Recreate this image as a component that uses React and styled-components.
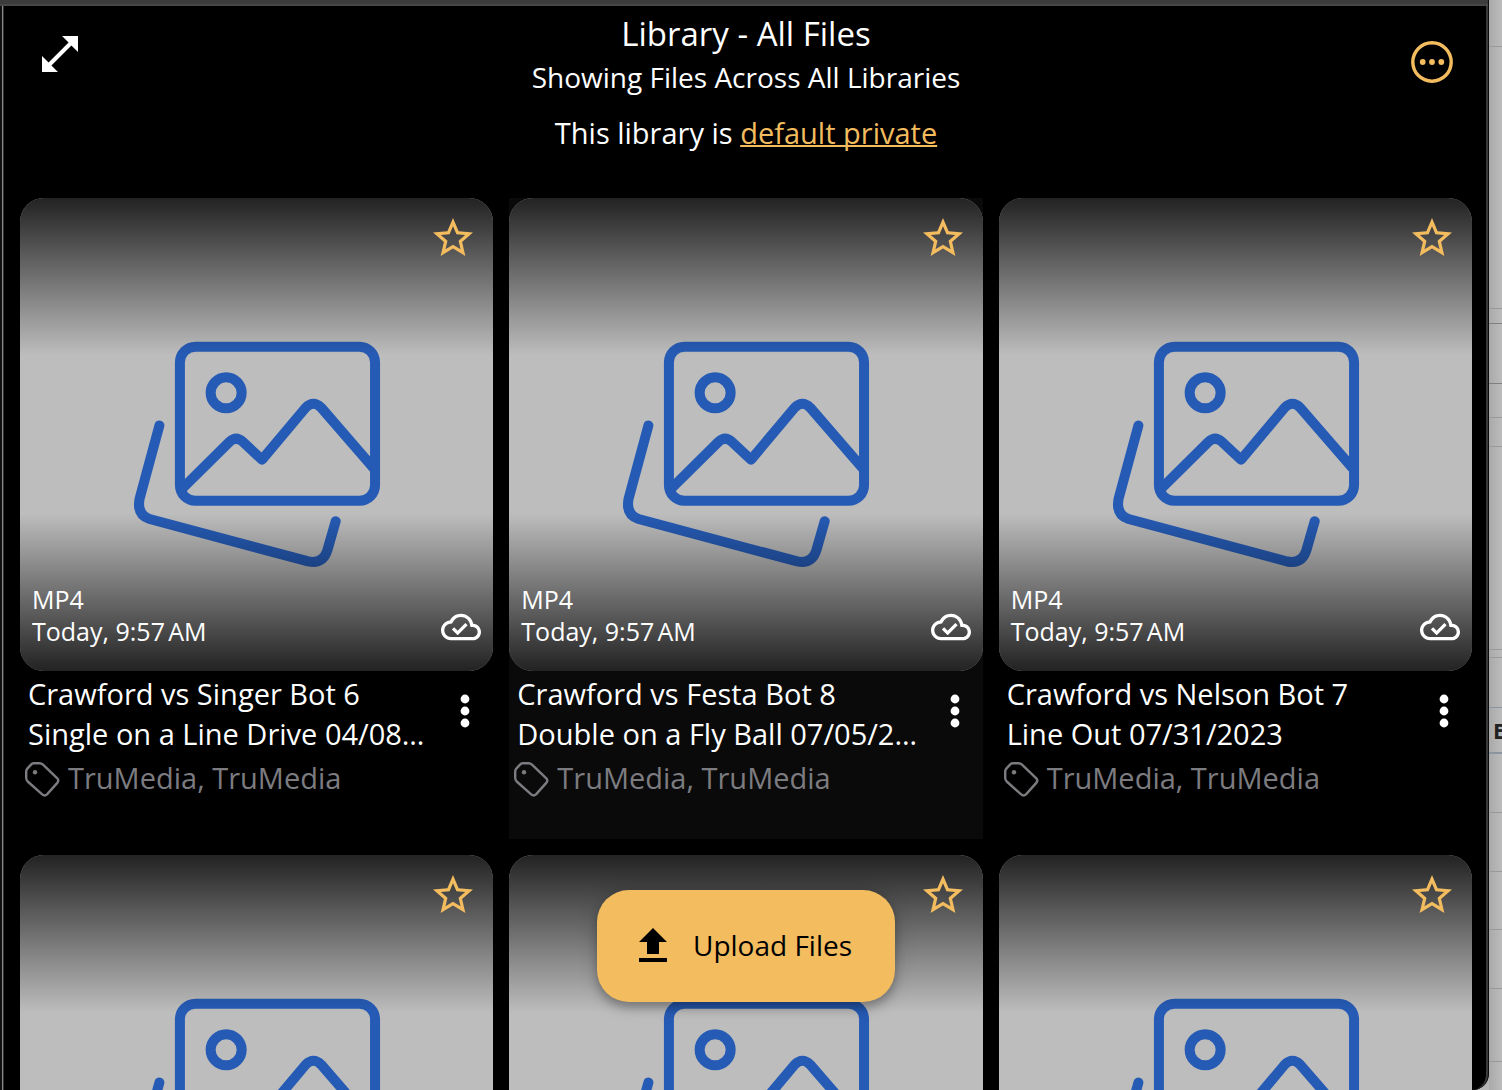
import React from 'react';
import styled, { createGlobalStyle } from 'styled-components';

const GlobalStyle = createGlobalStyle`
  * { box-sizing: border-box; }
  body {
    margin: 0;
    background: #111;
    color: #fff;
    font-family: "Open Sans", "Noto Sans", sans-serif;
    overflow: hidden;
  }
  button { font: inherit; color: inherit; }
`;

const Desktop = styled.div`
  display: flex;
  height: 100vh;
  overflow: hidden;
  background: #b5b5b5;
`;

const Window = styled.div`
  flex: 1;
  min-width: 0;
  display: flex;
  flex-direction: column;
  position: relative;
  overflow: hidden;
  background: #3c3c3c;
  border-right: 1px solid #0c0c0c;
  border-bottom-right-radius: 16px;
`;

const TitleStrip = styled.div`
  flex: none;
  height: 6px;
  background: #3c3c3c;
  border-bottom: 2px solid #474747;
`;

const Shell = styled.div`
  flex: 1;
  min-height: 0;
  display: flex;
  background: #111;
  padding-left: 2px;
`;

const Screen = styled.main`
  flex: 1;
  min-width: 0;
  overflow: hidden;
  background: #000;
  border-left: 1px solid #888;
  border-right: 2px solid #3a3a3a;
  border-bottom-right-radius: 16px;
  box-shadow: inset 1px 0 #333;
`;

const Header = styled.header`
  display: flex;
  align-items: flex-start;
  justify-content: space-between;
  height: 192px;
  padding: 6px 14px 0 17px;
`;

const HeaderText = styled.div`
  flex: 1;
  text-align: center;
`;

const Title = styled.h1`
  margin: 0;
  font-size: 33px;
  font-weight: 400;
  line-height: 44px;
`;

const Subtitle = styled.p`
  margin: 0;
  font-size: 28px;
  line-height: 42px;
`;

const Privacy = styled.p`
  margin: 0;
  padding-top: 14px;
  font-size: 29px;
  line-height: 42px;
`;

const PrivacyLink = styled.a`
  color: #f3bc5f;
  text-decoration: underline;
  text-decoration-skip-ink: none;
  text-decoration-thickness: 2px;
`;

const IconButton = styled.button`
  flex: none;
  display: block;
  width: 48px;
  height: 48px;
  padding: 0;
  border: 0;
  background: none;
  color: ${(p) => (p.$accent ? '#f3bc5f' : '#fff')};
  cursor: pointer;
  svg { display: block; width: 100%; height: 100%; fill: currentColor; }
`;

const HeaderAction = styled.div`
  flex: none;
  width: 80px;
  display: flex;
  justify-content: center;
  padding-top: ${(p) => p.$top}px;
`;

const Grid = styled.section`
  display: grid;
  grid-template-columns: repeat(3, minmax(0, 1fr));
  gap: 16px;
  padding: 0 14px 0 17px;
`;

const Card = styled.article`
  background: ${(p) => (p.$hovered ? '#0a0a0a' : 'transparent')};
`;

const Thumb = styled.div`
  position: relative;
  aspect-ratio: 1;
  border-radius: 24px;
  overflow: hidden;
  background: #bdbdbd;
`;

const Artwork = styled.svg`
  display: block;
  width: 100%;
  height: 100%;
`;

const Overlay = styled.div`
  position: absolute;
  inset: 0;
  display: flex;
  flex-direction: column;
  justify-content: space-between;
  background: linear-gradient(
    rgba(0, 0, 0, 0.82),
    transparent 33.3%,
    transparent 66.7%,
    rgba(0, 0, 0, 0.82)
  );
`;

const OverlayTop = styled.div`
  display: flex;
  justify-content: flex-end;
  padding: 16px;
`;

const OverlayBottom = styled.div`
  display: flex;
  align-items: flex-end;
  justify-content: space-between;
  padding: 0 12px 24px;
`;

const Meta = styled.div`
  font-size: 25px;
  line-height: 32px;
`;

const CloudIcon = styled.svg`
  width: 40px;
  height: 40px;
  fill: #fff;
`;

const Details = styled.div`
  height: 168px;
  padding: 3px 4px 0;
`;

const NameRow = styled.div`
  display: flex;
  justify-content: space-between;
  padding-left: 4px;
`;

const Name = styled.h2`
  flex: 1;
  min-width: 0;
  margin: 0;
  font-size: 29px;
  font-weight: 400;
  line-height: 40px;
`;

const NameLine = styled.span`
  display: block;
  white-space: nowrap;
`;

const MenuSlot = styled.div`
  flex: none;
  padding-top: 13px;
`;

const TagRow = styled.div`
  display: flex;
  align-items: center;
  gap: 8px;
  padding-top: 2px;
  color: #7c7c80;
  font-size: 29px;
  line-height: 44px;
`;

const TagIcon = styled.svg`
  flex: none;
  width: 36px;
  height: 40px;
  fill: none;
  stroke: currentColor;
  stroke-width: 2.4;
  stroke-linejoin: round;
`;

const UploadBar = styled.div`
  position: absolute;
  right: 16px;
  bottom: 88px;
  left: 20px;
  display: flex;
  justify-content: center;
  pointer-events: none;
`;

const UploadButton = styled.button`
  display: flex;
  align-items: center;
  gap: 16px;
  min-width: 298px;
  height: 112px;
  padding: 0 40px 0 32px;
  border: 0;
  border-radius: 32px;
  background: #f3bc5f;
  color: #000;
  font-size: 28px;
  white-space: nowrap;
  box-shadow: 0 6px 10px rgba(0, 0, 0, 0.25), 0 2px 20px rgba(0, 0, 0, 0.15);
  pointer-events: auto;
  cursor: pointer;
  svg { width: 48px; height: 48px; fill: currentColor; }
`;

const UploadLabel = styled.span`
  padding-bottom: 2px;
`;

const Behind = styled.aside`
  flex: none;
  width: 13px;
  overflow: hidden;
  background: linear-gradient(90deg, #a9a9a9, #bcbcbc);
`;

const BehindRow = styled.div`
  display: flex;
  align-items: center;
  height: ${(p) => p.$h}px;
  padding-left: 4px;
  border-bottom: ${(p) => p.$w || 1}px solid ${(p) => p.$line || '#9a9a9a'};
  color: #222;
  font-size: 22px;
  font-weight: 700;
`;

const behindRows = [
  { h: 47 }, { h: 262 }, { h: 15, line: '#808080' }, { h: 60, line: '#808080' },
  { h: 34 }, { h: 29 }, { h: 203 }, { h: 8 },
  { h: 50, line: '#8b95a0' }, { h: 46, line: '#8b95a0', w: 2, text: 'E' },
  { h: 59 }, { h: 59 }, { h: 58 }, { h: 59 }, { h: 73 },
];

const files = [
  ['Crawford vs Singer Bot 6', 'Single on a Line Drive 04/08…'],
  ['Crawford vs Festa Bot 8', 'Double on a Fly Ball 07/05/2…'],
  ['Crawford vs Nelson Bot 7', 'Line Out 07/31/2023'],
  ['Crawford vs Singer Bot 5', 'Single on a Line Drive 04/08…'],
  ['Crawford vs Festa Bot 7', 'Double on a Fly Ball 07/05/2…'],
  ['Crawford vs Nelson Bot 6', 'Line Out 07/31/2023'],
];

function PicturesArt() {
  return (
    <Artwork viewBox="20 198 473 473" aria-hidden="true">
      <g fill="none" stroke="#265bb5" strokeWidth="10" strokeLinecap="round" strokeLinejoin="round">
        <rect x="179.8" y="346.6" width="195" height="154" rx="15.5" />
        <circle cx="226" cy="392.7" r="15.5" />
        <path d="M182 488.500 L229.500 441.500 Q236 435.500 242.500 441.500 L261.800 459.500 L305.500 407.500 Q313.200 399.500 321 407.500 L373 467.500" />
        <path d="M159.300 425.300 L139.500 498.500 Q136.500 514.500 149.500 518.800 L308 561.200 Q322.500 564 327 550.500 L335.500 521" />
      </g>
    </Artwork>
  );
}

function FileCard({ name, hovered }) {
  return (
    <Card $hovered={hovered}>
      <Thumb>
        <PicturesArt />
        <Overlay>
          <OverlayTop>
            <IconButton $accent aria-label="Add to favorites">
              <svg viewBox="0 0 24 24">
                <path d="M22 9.240l-7.190-.62L12 2 9.190 8.630 2 9.240l5.460 4.730L5.820 21 12 17.270 18.180 21l-1.630-7.030L22 9.240zM12 15.400l-3.760 2.270 1-4.280-3.320-2.880 4.380-.38L12 6.100l1.710 4.040 4.380.38-3.320 2.880 1 4.280L12 15.400z" />
              </svg>
            </IconButton>
          </OverlayTop>
          <OverlayBottom>
            <Meta>
              <div>MP4</div>
              <div>Today, 9:57{'\u202f'}AM</div>
            </Meta>
            <CloudIcon viewBox="0 0 24 24" role="img" aria-label="Uploaded">
              <path d="M19.350 10.040C18.670 6.590 15.640 4 12 4 9.110 4 6.600 5.640 5.350 8.040 2.340 8.360 0 10.910 0 14c0 3.310 2.690 6 6 6h13c2.760 0 5-2.240 5-5 0-2.640-2.050-4.780-4.650-4.960zM19 18H6c-2.210 0-4-1.790-4-4 0-2.050 1.530-3.760 3.560-3.970l1.070-.11.5-.95C8.080 7.140 9.940 6 12 6c2.620 0 4.880 1.860 5.390 4.430l.3 1.500 1.530.11c1.560.1 2.780 1.410 2.780 2.960 0 1.650-1.350 3-3 3zm-9-3.820l-2.090-2.090L6.500 13.500 10 17l6.010-6.010-1.410-1.410z" />
            </CloudIcon>
          </OverlayBottom>
        </Overlay>
      </Thumb>
      <Details>
        <NameRow>
          <Name>
            {name.map((line) => <NameLine key={line}>{line}</NameLine>)}
          </Name>
          <MenuSlot>
            <IconButton aria-label="File menu">
              <svg viewBox="0 0 24 24">
                <circle cx="12" cy="6" r="2.200" />
                <circle cx="12" cy="12" r="2.200" />
                <circle cx="12" cy="18" r="2.200" />
              </svg>
            </IconButton>
          </MenuSlot>
        </NameRow>
        <TagRow>
          <TagIcon viewBox="24 759 36 40" aria-hidden="true">
            <path d="M33.500 764.200 H39.500 Q41.500 764.200 43 765.600 L57.300 779.300 Q59.300 781.600 57.300 783.900 L47 795.400 Q44.600 797.500 42.200 795.400 L27.700 782.500 Q26.200 781 26.200 779 V772.500 Q26.200 770.800 27.300 769.600 L31 765.600 Q32.200 764.200 33.500 764.200 Z" />
            <circle cx="35" cy="773.200" r="2.200" fill="currentColor" stroke="none" />
          </TagIcon>
          TruMedia, TruMedia
        </TagRow>
      </Details>
    </Card>
  );
}

export default function App() {
  return (
    <>
      <GlobalStyle />
      <Desktop>
        <Window>
          <TitleStrip />
          <Shell>
            <Screen>
              <Header>
                <HeaderAction $top={18}>
                  <IconButton aria-label="Expand">
                    <svg viewBox="0 0 24 24">
                      <path d="M21 11V3h-8l3.290 3.290-10 10L3 13v8h8l-3.290-3.290 10-10z" />
                    </svg>
                  </IconButton>
                </HeaderAction>
                <HeaderText>
                  <Title>Library - All Files</Title>
                  <Subtitle>Showing Files Across All Libraries</Subtitle>
                  <Privacy>
                    This library is <PrivacyLink href="#privacy">default private</PrivacyLink>
                  </Privacy>
                </HeaderText>
                <HeaderAction $top={26}>
                  <IconButton $accent aria-label="More options">
                    <svg viewBox="0 0 48 48">
                      <circle cx="24" cy="24" r="19.200" fill="none" stroke="currentColor" strokeWidth="3.400" />
                      <circle cx="14.700" cy="24" r="2.900" />
                      <circle cx="24" cy="24" r="2.900" />
                      <circle cx="33.300" cy="24" r="2.900" />
                    </svg>
                  </IconButton>
                </HeaderAction>
              </Header>
              <Grid>
                {files.map((name, i) => <FileCard key={name[0]} name={name} hovered={i === 1} />)}
              </Grid>
            </Screen>
          </Shell>
          <UploadBar>
            <UploadButton>
              <svg viewBox="0 0 24 24" aria-hidden="true">
                <path d="M5 20h14v-2H5v2zm0-10h4v6h6v-6h4l-7-7-7 7z" />
              </svg>
              <UploadLabel>Upload Files</UploadLabel>
            </UploadButton>
          </UploadBar>
        </Window>
        <Behind>
          {behindRows.map((r, i) => (
            <BehindRow key={i} $h={r.h} $line={r.line} $w={r.w}>{r.text}</BehindRow>
          ))}
        </Behind>
      </Desktop>
    </>
  );
}
